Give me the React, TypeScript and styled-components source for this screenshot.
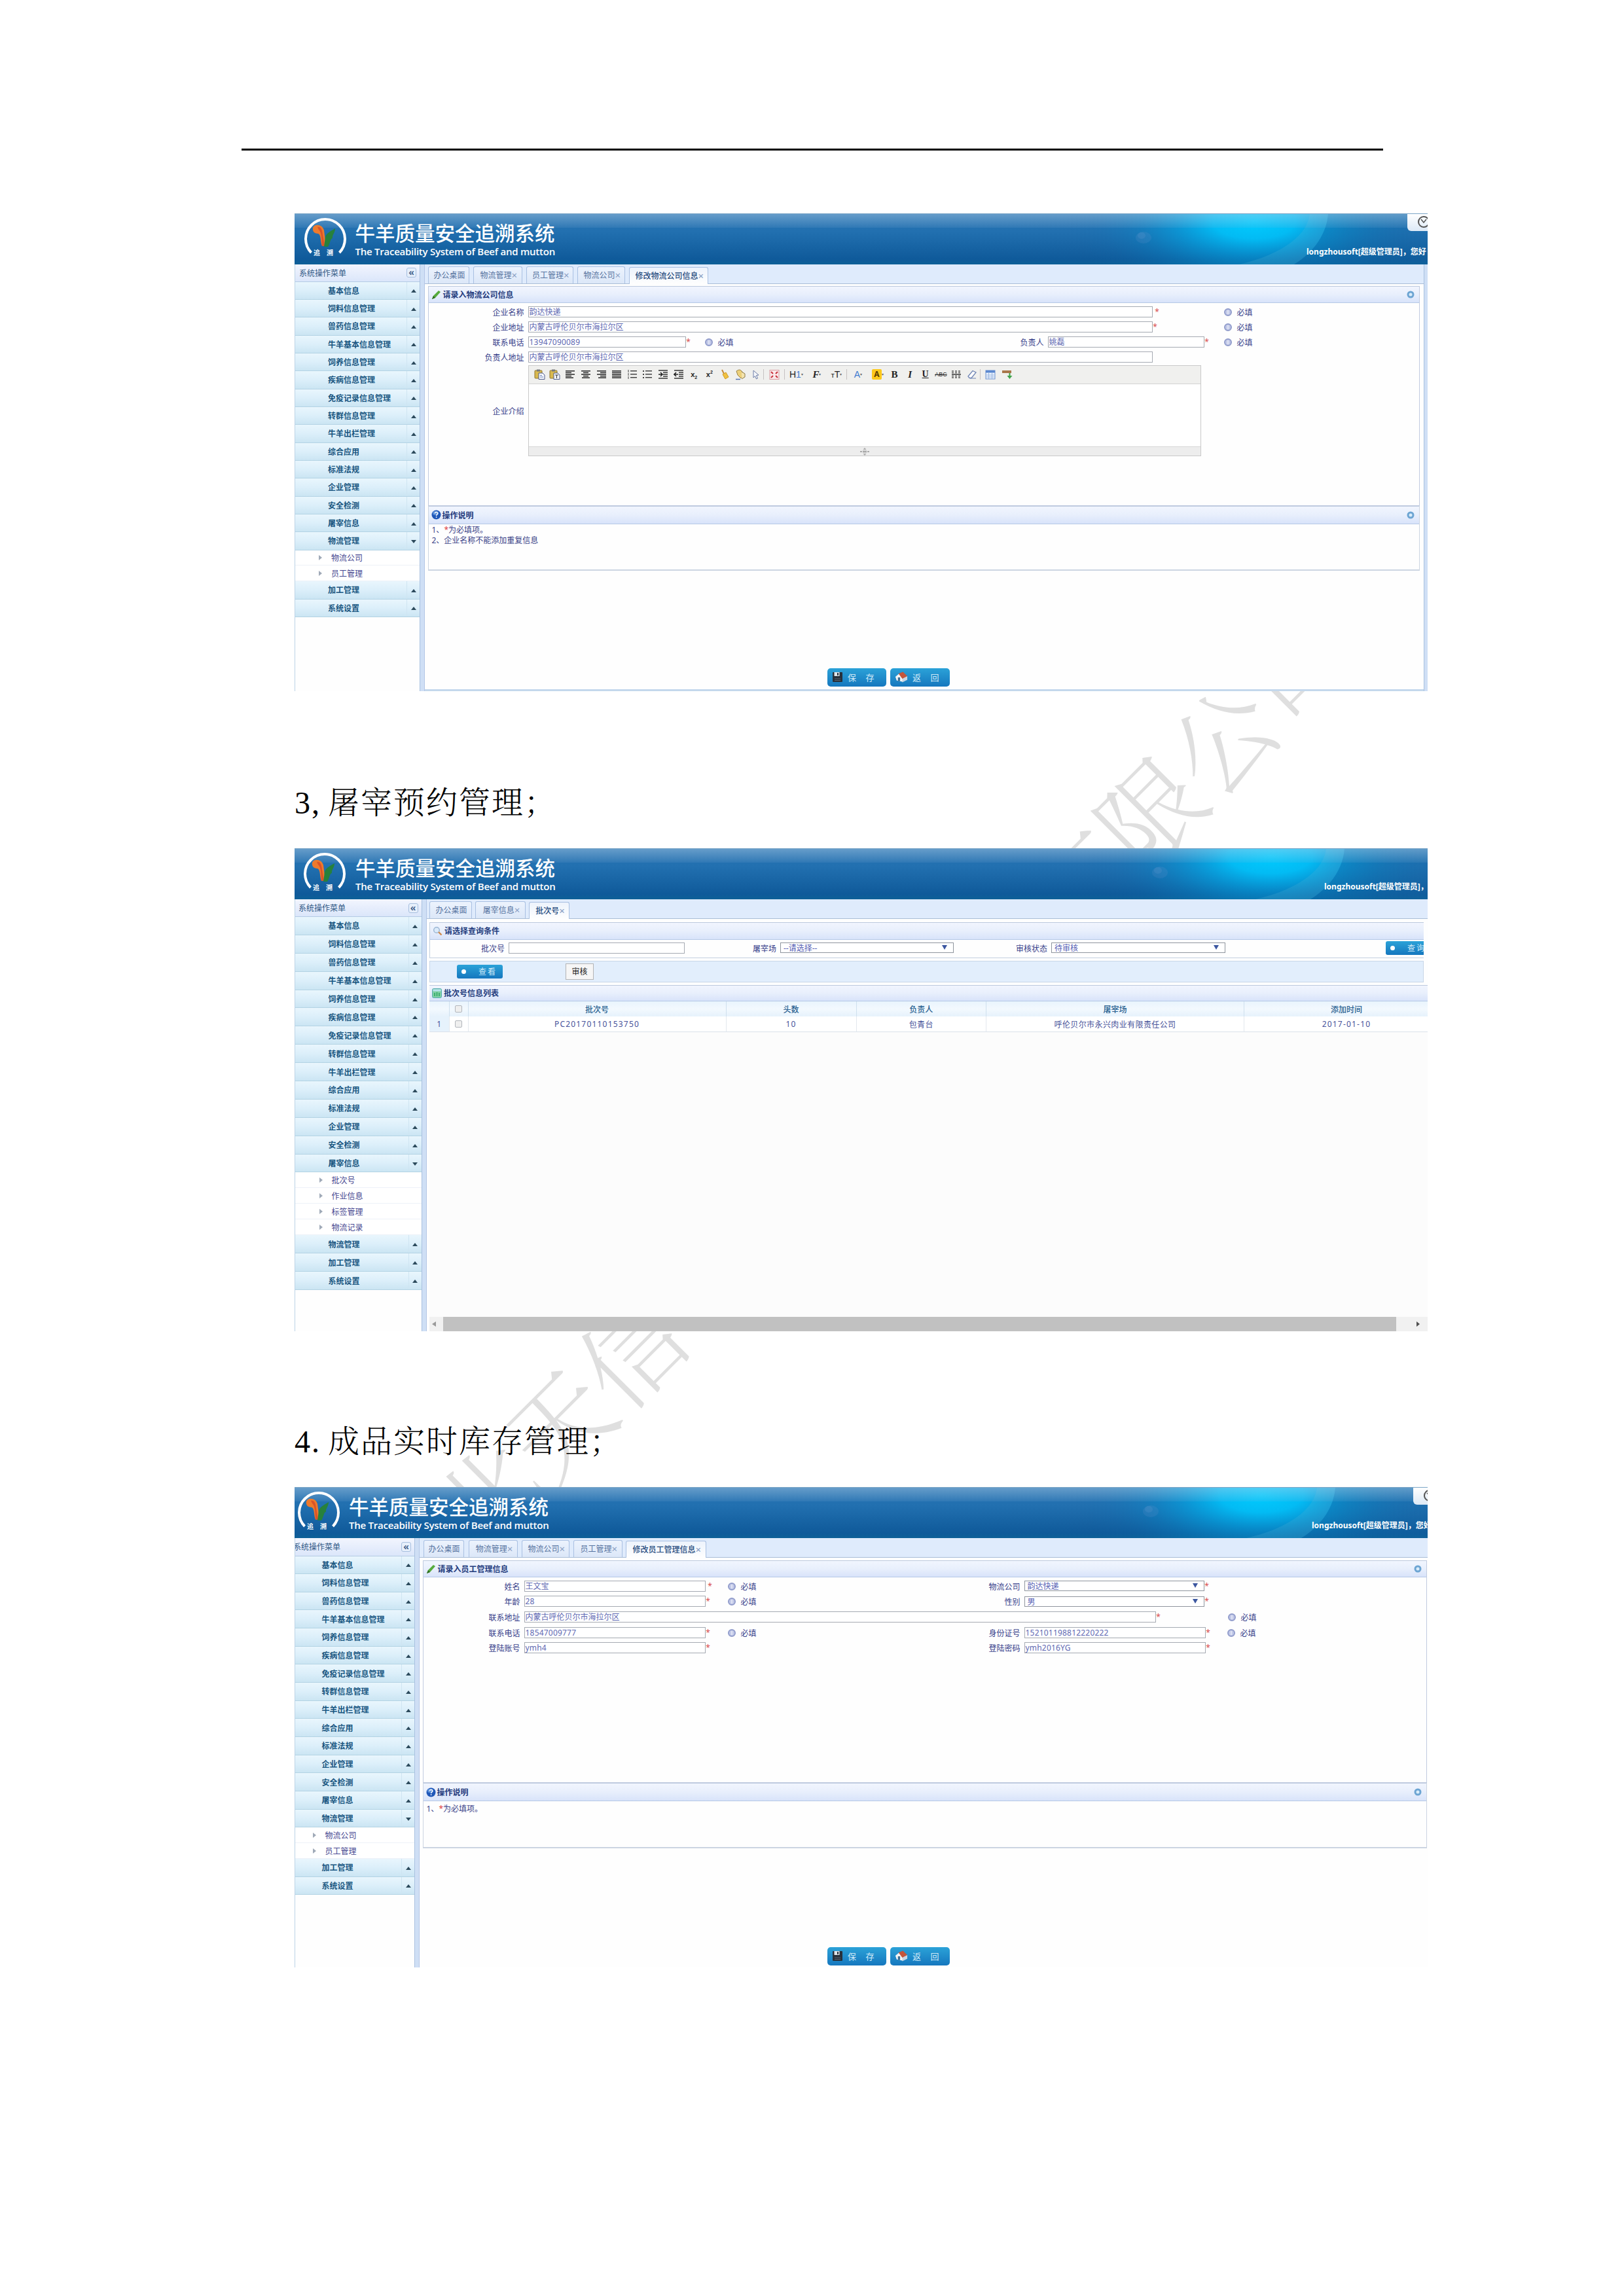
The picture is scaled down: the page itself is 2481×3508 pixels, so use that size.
import { FC, ReactNode } from "react";
import styled, { createGlobalStyle } from "styled-components";

const sans = `"Noto Sans", "Noto Sans CJK SC", sans-serif`;

const menuItems = [
  "基本信息",
  "饲料信息管理",
  "兽药信息管理",
  "牛羊基本信息管理",
  "饲养信息管理",
  "疾病信息管理",
  "免疫记录信息管理",
  "转群信息管理",
  "牛羊出栏管理",
  "综合应用",
  "标准法规",
  "企业管理",
  "安全检测",
  "屠宰信息",
  "物流管理",
  "加工管理",
  "系统设置",
];

const LogoIcon: FC = () => (
  <svg width="64" height="64" viewBox="0 0 64 64">
    <path d="M10.5 54 A30 30 0 1 1 53.5 54" fill="none" stroke="#fff" strokeWidth="4" />
    <path
      d="M13 16 C16 9 28 11 30 20 L33 43 L27 44 C24 36 26 27 21 25 C15 25 12 21 13 16Z"
      fill="#ee7a2c"
    />
    <path d="M20 15 C25 14 27 18 28 26 L31 43 L27 44 C26 34 27 24 22 19Z" fill="#d9532a" />
    <path d="M30 45 L32 30 C34 24 39 22 47 17 C47 24 42 27 43 32 C39 33 40 39 36 45Z" fill="#27813c" />
    <text x="14" y="58" fontSize="10" fontWeight="700" fill="#fff" fontFamily="Noto Sans CJK SC">
      追
    </text>
    <text x="34" y="58" fontSize="10" fontWeight="700" fill="#fff" fontFamily="Noto Sans CJK SC">
      溯
    </text>
  </svg>
);

const GlowArt: FC = () => (
  <svg width="760" height="78" viewBox="0 0 760 78">
    <defs>
      <radialGradient
        id="glow"
        gradientUnits="userSpaceOnUse"
        cx="0"
        cy="0"
        r="290"
        gradientTransform="translate(415 12) scale(1 0.42)"
      >
        <stop offset="0" stopColor="#00ccff" />
        <stop offset="0.22" stopColor="#00c2fa" stopOpacity="0.92" />
        <stop offset="0.42" stopColor="#00a8e6" stopOpacity="0.62" />
        <stop offset="0.62" stopColor="#0490d0" stopOpacity="0.34" />
        <stop offset="0.82" stopColor="#0a7abc" stopOpacity="0.12" />
        <stop offset="1" stopColor="#1068a8" stopOpacity="0" />
      </radialGradient>
      <linearGradient id="shade" x1="0" y1="0" x2="1" y2="0">
        <stop offset="0" stopColor="#0b5a98" stopOpacity="0.3" />
        <stop offset="1" stopColor="#1a6cac" stopOpacity="0.2" />
      </linearGradient>
    </defs>
    <rect width="760" height="78" fill="url(#glow)" />
    <path d="M500 0 C498 30 462 62 392 78 L476 78 C508 58 526 30 528 0Z" fill="#5fb8d8" opacity="0.2" />
    <path d="M528 0 C526 30 508 58 476 78 L760 78 L760 0Z" fill="url(#shade)" />
    <ellipse cx="246" cy="37" rx="12" ry="9" fill="#7d9fd4" opacity="0.14" />
    <ellipse cx="243" cy="34" rx="6" ry="5" fill="#8fa8dc" opacity="0.14" />
  </svg>
);

const ClockIcon: FC = () => (
  <svg width="20" height="20" viewBox="0 0 20 20" fill="none" stroke="#555" strokeWidth="2">
    <circle cx="10" cy="10" r="8" />
    <path d="M6 6 L10 11 L14 6" strokeWidth="1.5" />
  </svg>
);

const PencilIcon: FC = () => (
  <svg width="15" height="15" viewBox="0 0 15 15">
    <path d="M1 14 L3 9 L11 1 L14 3 L6 12Z" fill="#56ab3c" />
    <path d="M1 14 L3 9 L6 12Z" fill="#2e6b22" />
  </svg>
);

const SearchIcon: FC = () => (
  <svg width="15" height="15" viewBox="0 0 15 15">
    <circle cx="6" cy="6" r="4.3" fill="#dcebfa" stroke="#9db7d4" strokeWidth="1.5" />
    <path d="M9 9 L13.5 13.5" stroke="#d08a4a" strokeWidth="2.4" />
  </svg>
);

const ListIcon: FC = () => (
  <svg width="15" height="15" viewBox="0 0 15 15">
    <rect x="0.5" y="0.5" width="14" height="14" rx="2" fill="#7fd0a4" stroke="#56aab0" />
    <rect x="1.5" y="1.5" width="12" height="3" fill="#b8e2f0" />
    <path d="M4 7v5M7.5 6v6M11 7v5" stroke="#3eb070" strokeWidth="2" />
  </svg>
);

const HelpIcon: FC = () => (
  <svg width="15" height="15" viewBox="0 0 15 15">
    <circle cx="7.5" cy="7.5" r="7" fill="#1f57b8" />
    <ellipse cx="6.5" cy="5" rx="4.5" ry="3.2" fill="#7fb2ee" opacity="0.6" />
    <path d="M5.3 5.6c0-3 4.6-2.6 4.4-.2C9.6 7 7.6 7 7.6 9M7.6 10.3v1.6" stroke="#fff" strokeWidth="1.5" fill="none" />
  </svg>
);

const RingIcon: FC = () => (
  <svg width="12" height="12" viewBox="0 0 12 12">
    <circle cx="6" cy="6" r="4" fill="#d9ecfa" stroke="#6da5d3" strokeWidth="3" />
  </svg>
);

const InfoIcon: FC = () => (
  <svg width="12" height="12" viewBox="0 0 12 12">
    <circle cx="6" cy="6" r="5" fill="#c3cae8" stroke="#929dcc" strokeWidth="2" />
    <path d="M6 3v6" stroke="#e6e9f6" strokeWidth="1.6" />
  </svg>
);

const SaveIcon: FC = () => (
  <svg width="17" height="17" viewBox="0 0 17 17">
    <rect x="1" y="1" width="15" height="15" rx="1" fill="#27303a" />
    <rect x="3.5" y="1" width="8" height="6" fill="#dfe5ea" />
    <rect x="8" y="2" width="2" height="4" fill="#27303a" />
    <path d="M4 11h9M4 13.5h9" stroke="#59636e" strokeWidth="1" />
  </svg>
);

const HomeIcon: FC = () => (
  <svg width="20" height="18" viewBox="0 0 21 18">
    <path d="M1 8 L7 3 L13 9 V16 L3 14Z" fill="#f2f4f6" />
    <path d="M12 10 L20 7 V13 L12 17Z" fill="#c7d5e2" />
    <path d="M6 3 L13 0 L20 7 L12 11Z" fill="#c4553a" />
    <rect x="5" y="9" width="3.5" height="6" fill="#3a6f94" />
  </svg>
);

const GripIcon: FC = () => (
  <svg width="14" height="12" viewBox="0 0 14 12" fill="#aaa">
    <path d="M7 0 L9.5 3 H4.5Z M7 12 L4.5 9 H9.5Z M0 5h3v2H0z M11 5h3v2h-3z M4 4.500h6v3H4z" />
  </svg>
);

const lines = (rows: [number, number][]) => (
  <svg width="16" height="14" viewBox="0 0 16 14">
    {rows.map(([x, w], i) => (
      <rect key={i} x={x} y={1 + i * 2.6} width={w} height="1.6" fill="#333" />
    ))}
  </svg>
);

const PasteIcon: FC<{ mark: string }> = ({ mark }) => (
  <svg width="17" height="16" viewBox="0 0 17 16">
    <rect x="1" y="2" width="11" height="12" rx="1" fill="#d9b94e" stroke="#8c7430" />
    <rect x="4" y="0.5" width="5" height="3" fill="#77797c" />
    <path d="M7 6h6l3 3v6.5H7z" fill="#f6f8fc" stroke="#4f5d8c" />
    {mark === "T" ? (
      <path d="M9 9h5M11.5 9v5" stroke="#333" />
    ) : (
      <path d="M9 9.5h3M9 12h5" stroke="#6a80b8" />
    )}
  </svg>
);

const ListLines: FC<{ numbered?: boolean }> = ({ numbered }) => (
  <svg width="16" height="14" viewBox="0 0 16 14">
    {[1, 6, 11].map((y) => (
      <g key={y}>
        <rect x={numbered ? 1.5 : 1} y={y - (numbered ? 1 : 0)} width={numbered ? 1 : 2} height={numbered ? 4 : 2} fill="#444" />
        <rect x="5" y={y} width="10" height="1.5" fill="#444" />
      </g>
    ))}
  </svg>
);

const IndentIcon: FC<{ out?: boolean }> = ({ out }) => (
  <svg width="16" height="14" viewBox="0 0 16 14">
    <path d="M1 1h14M8 4h7M8 7h7M8 10h7M1 13h14" stroke="#333" strokeWidth="1.5" />
    <path d={out ? "M7 7H2M4 4L1 7L4 10" : "M1 7h5M4 4L7 7L4 10"} stroke="#222" strokeWidth="1.6" fill="none" />
  </svg>
);

const BroomIcon: FC = () => (
  <svg width="15" height="16" viewBox="0 0 15 16">
    <path d="M3 1 L6 7" stroke="#c48a3a" strokeWidth="2" />
    <path d="M4 8 L9 5 L13 12 L8 15Z" fill="#efc142" stroke="#d29c24" />
  </svg>
);

const PaintIcon: FC = () => (
  <svg width="17" height="17" viewBox="0 0 17 17">
    <path d="M2 3 Q7 -1 10 3 L14 8 L9 14 L4 9Z" fill="#ecd07a" stroke="#9a8246" />
    <path d="M10 4 L15 7 V12 L10 15" fill="#f4e3ac" stroke="#8b7a4a" />
    <path d="M1 15.5h7" stroke="#5775b5" strokeWidth="1.5" />
  </svg>
);

const CursorIcon: FC = () => (
  <svg width="12" height="15" viewBox="0 0 12 15">
    <path d="M2 1 L10 8 L6.5 8.5 L8.5 13 L6.5 14 L4.6 9.6 L2 12Z" fill="#f6f8fc" stroke="#6b7ba5" />
  </svg>
);

const ExpandIcon: FC = () => (
  <svg width="16" height="15" viewBox="0 0 16 15">
    <rect x="1" y="0.5" width="14" height="14" fill="#fbe9ea" stroke="#d99ea2" />
    <path d="M3 3l3 3M13 3l-3 3M3 12l3-3M13 12l-3-3" stroke="#c8333e" strokeWidth="2" />
  </svg>
);

const RuleIcon: FC = () => (
  <svg width="16" height="14" viewBox="0 0 16 14">
    <path d="M1 2h14M1 12h14M1 4.5h14M1 9.5h14" stroke="#555" strokeWidth="1.5" strokeDasharray="3 2" />
    <path d="M1 7h14" stroke="#333" strokeWidth="1.5" />
  </svg>
);

const EraserIcon: FC = () => (
  <svg width="16" height="14" viewBox="0 0 16 14">
    <path d="M2 10 L9 1.5 L14 4 L7 12.5 H4Z" fill="#fff" stroke="#6f84b4" strokeWidth="1.3" />
    <path d="M5 13h9" stroke="#6f84b4" />
  </svg>
);

const TableIcon: FC = () => (
  <svg width="16" height="15" viewBox="0 0 16 15">
    <rect x="1" y="1" width="14" height="13" fill="#eaf2fd" stroke="#6c92cf" />
    <rect x="1" y="1" width="14" height="3.5" fill="#5b88d0" />
    <path d="M1 8h14M1 11h14M5.5 4v10M10.5 4v10" stroke="#9cb7e0" />
  </svg>
);

const BreakIcon: FC = () => (
  <svg width="17" height="15" viewBox="0 0 17 15">
    <rect x="1" y="1" width="14" height="4" fill="#a9764a" />
    <path d="M11.5 5v4h-3l4 5 4-5h-3V5z" fill="#3fa34a" />
  </svg>
);

const App: FC = () => {
  return (
    <>
      <GlobalStyle />
      <Page>
        <TopRule />
        <Watermark $x={1808} $y={1180}>有限公司</Watermark>
        <Watermark $x={739} $y={2281}>由河北天信</Watermark>

        <Shot $top={96} $height={730}>
          <Banner titleLeft={92.5} logoLeft={15} userText="longzhousoft[超级管理员]，您好" userWidth={185} corner={31} glow={80} />
          <Work>
            <Sidebar width={191} pad={50} headPad={6} headH={26.5} rowH={27.35} open="物流管理" subItems={["物流公司", "员工管理"]} subH={23.8} />
            <Splitter $w={6.5} />
            <Main>
              <TabStrip $h={29.5} $pad={5.5}>
                <Tab $w={63} $gap={6}>办公桌面</Tab>
                <Tab $w={74.5} $gap={6}>物流管理<X /></Tab>
                <Tab $w={72.5} $gap={5.5}>员工管理<X /></Tab>
                <Tab $w={73.5} $gap={5.5}>物流公司<X /></Tab>
                <Tab $w={121.5} $gap={0} $active>修改物流公司信息<X /></Tab>
              </TabStrip>
              <Content $l={5} $r={6} $t={3.5}>
                <Panel $h={335.5}>
                  <PanelHead $h={26}>
                    <PencilIcon />
                    <HeadText>请录入物流公司信息</HeadText>
                    <RingIcon />
                  </PanelHead>
                  <PanelBody>
                    <Line $h={23.1}>
                      <Label $w={146}>企业名称</Label>
                      <Input $w={954}>韵达快递</Input>
                      <Mark $gap={3} />
                      <Hint gap={98} />
                    </Line>
                    <Line $h={23.1}>
                      <Label $w={146}>企业地址</Label>
                      <Input $w={954}>内蒙古呼伦贝尔市海拉尔区</Input>
                      <Mark $gap={0} />
                      <Hint gap={101} />
                    </Line>
                    <Line $h={23.1}>
                      <Label $w={146}>联系电话</Label>
                      <Input $w={241} $latin>13947090089</Input>
                      <Mark $gap={0} />
                      <Hint gap={21} />
                      <Label $w={474}>负责人</Label>
                      <Input $w={239}>姚磊</Input>
                      <Mark $gap={0} />
                      <Hint gap={22} />
                    </Line>
                    <Line $h={23.1}>
                      <Label $w={146}>负责人地址</Label>
                      <Input $w={954}>内蒙古呼伦贝尔市海拉尔区</Input>
                    </Line>
                    <Line $h={141}>
                      <Label $w={146}>企业介绍</Label>
                      <Editor />
                    </Line>
                  </PanelBody>
                </Panel>
                <Notes $h={99.5}>
                  <PanelHead $h={28}>
                    <HelpIcon />
                    <HeadText $tight>操作说明</HeadText>
                    <RingIcon />
                  </PanelHead>
                  <NoteList $top={1}>
                    <li>1、<Red>*</Red>为必填项。</li>
                    <li>2、企业名称不能添加重复信息</li>
                  </NoteList>
                </Notes>
                <Actions top={149} left={610.5} />
              </Content>
              <BottomEdge />
            </Main>
            <Splitter $w={6} />
          </Work>
        </Shot>

        <Heading $h={240} $top={139}>
          <Half>3,</Half>屠宰预约管理；
        </Heading>

        <Shot $top={0} $height={738}>
          <Banner titleLeft={93} logoLeft={14} userText="longzhousoft[超级管理员]，" userWidth={158} glow={105} />
          <Work>
            <Sidebar width={193.5} pad={50.5} headPad={5} headH={27} rowH={27.9} open="屠宰信息" subItems={["批次号", "作业信息", "标签管理", "物流记录"]} subH={24} />
            <Splitter $w={7} />
            <Main>
              <TabStrip $h={29.5} $pad={4.5}>
                <Tab $w={65} $gap={5}>办公桌面</Tab>
                <Tab $w={77} $gap={5}>屠宰信息<X /></Tab>
                <Tab $w={62} $gap={0} $active>批次号<X /></Tab>
              </TabStrip>
              <Content $l={4.5} $r={0} $t={5}>
                <QueryPanel>
                  <PanelHead $h={27}>
                    <SearchIcon />
                    <HeadText>请选择查询条件</HeadText>
                  </PanelHead>
                  <Line $h={25}>
                    <Label $w={114}>批次号</Label>
                    <Input $w={269} />
                    <Label $w={140}>屠宰场</Label>
                    <Select $w={265}>--请选择--<Caret /></Select>
                    <Label $w={143}>审核状态</Label>
                    <Select $w={266}>待审核<Caret /></Select>
                    <BlueButton $w={70} $h={21} $ml={245}>
                      <Dot />查 询
                    </BlueButton>
                  </Line>
                </QueryPanel>
                <ToolBar>
                  <BlueButton $w={70} $h={21} $ml={41}>
                    <Dot />查 看
                  </BlueButton>
                  <PlainButton>审核</PlainButton>
                </ToolBar>
                <PanelHead $h={25.5}>
                  <ListIcon />
                  <HeadText>批次号信息列表</HeadText>
                </PanelHead>
                <Grid>
                  <HeadCell />
                  <HeadCell><CheckBox /></HeadCell>
                  <HeadCell>批次号</HeadCell>
                  <HeadCell>头数</HeadCell>
                  <HeadCell>负责人</HeadCell>
                  <HeadCell>屠宰场</HeadCell>
                  <HeadCell>添加时间</HeadCell>
                  <Cell $first>1</Cell>
                  <Cell><CheckBox /></Cell>
                  <Cell $latin>PC20170110153750</Cell>
                  <Cell $latin>10</Cell>
                  <Cell>包青台</Cell>
                  <Cell>呼伦贝尔市永兴肉业有限责任公司</Cell>
                  <Cell $latin>2017-01-10</Cell>
                </Grid>
                <Blank />
                <ScrollBar>
                  <Triangle $dir="left" $c="#9a9a9a" />
                  <Thumb />
                  <Triangle $dir="right" $c="#505050" />
                </ScrollBar>
              </Content>
            </Main>
          </Work>
        </Shot>

        <Heading $h={238} $top={137}>
          <Half>4.</Half>成品实时库存管理；
        </Heading>

        <Shot $top={0} $height={734}>
          <Banner titleLeft={83} logoLeft={5} userText="longzhousoft[超级管理员]，您好" userWidth={177} corner={22} glow={91} />
          <Work>
            <Sidebar width={183} pad={40.5} headPad={-3} headH={27.5} rowH={27.67} open="物流管理" subItems={["物流公司", "员工管理"]} subH={23.8} />
            <Splitter $w={6.5} />
            <Main>
              <TabStrip $h={29.5} $pad={6}>
                <Tab $w={62} $gap={7.5}>办公桌面</Tab>
                <Tab $w={75} $gap={5.5}>物流管理<X /></Tab>
                <Tab $w={73.5} $gap={6}>物流公司<X /></Tab>
                <Tab $w={74.5} $gap={5.5}>员工管理<X /></Tab>
                <Tab $w={122.5} $gap={0} $active>修改员工管理信息<X /></Tab>
              </TabStrip>
              <Content $l={5} $r={1.5} $t={4.5}>
                <Panel $h={340}>
                  <PanelHead $h={26}>
                    <PencilIcon />
                    <HeadText>请录入员工管理信息</HeadText>
                    <RingIcon />
                  </PanelHead>
                  <PanelBody>
                    <Line $h={23.6}>
                      <Label $w={148}>姓名</Label>
                      <Input $w={277}>王文宝</Input>
                      <Mark $gap={3} />
                      <Hint gap={23} />
                      <Label $w={403}>物流公司</Label>
                      <Select $w={275}>韵达快递<Caret /></Select>
                      <Mark $gap={0} />
                    </Line>
                    <Line $h={23.6}>
                      <Label $w={148}>年龄</Label>
                      <Input $w={277} $latin>28</Input>
                      <Mark $gap={0} />
                      <Hint gap={26} />
                      <Label $w={403}>性别</Label>
                      <Select $w={275}>男<Caret /></Select>
                      <Mark $gap={0} />
                    </Line>
                    <Line $h={23.6}>
                      <Label $w={148}>联系地址</Label>
                      <Input $w={965}>内蒙古呼伦贝尔市海拉尔区</Input>
                      <Mark $gap={0} />
                      <Hint gap={102} />
                    </Line>
                    <Line $h={23.6}>
                      <Label $w={148}>联系电话</Label>
                      <Input $w={277} $latin>18547009777</Input>
                      <Mark $gap={0} />
                      <Hint gap={26} />
                      <Label $w={403}>身份证号</Label>
                      <Input $w={277} $latin>152101198812220222</Input>
                      <Mark $gap={0} />
                      <Hint gap={25} />
                    </Line>
                    <Line $h={23.6}>
                      <Label $w={148}>登陆账号</Label>
                      <Input $w={277} $latin>ymh4</Input>
                      <Mark $gap={0} />
                      <Label $w={473}>登陆密码</Label>
                      <Input $w={277} $latin>ymh2016YG</Input>
                      <Mark $gap={0} />
                    </Line>
                  </PanelBody>
                </Panel>
                <Notes $h={100}>
                  <PanelHead $h={28}>
                    <HelpIcon />
                    <HeadText $tight>操作说明</HeadText>
                    <RingIcon />
                  </PanelHead>
                  <NoteList $top={4}>
                    <li>1、<Red>*</Red>为必填项。</li>
                  </NoteList>
                </Notes>
                <Actions top={151} left={618.5} />
              </Content>
            </Main>
          </Work>
        </Shot>
      </Page>
    </>
  );
};

export default App;

interface BannerProps {
  titleLeft: number;
  logoLeft: number;
  userText: string;
  userWidth: number;
  corner?: number;
  glow: number;
}

const Banner: FC<BannerProps> = ({ titleLeft, logoLeft, userText, userWidth, corner, glow }) => (
  <BannerBox>
    <Glow $over={glow}>
      <GlowArt />
    </Glow>
    <Gloss />
    <LogoBox $left={logoLeft} $w={titleLeft - logoLeft}>
      <LogoIcon />
    </LogoBox>
    <Titles>
      <Title>牛羊质量安全追溯系统</Title>
      <SubTitle>The Traceability System of Beef and mutton</SubTitle>
    </Titles>
    <User $w={userWidth}>{userText}</User>
    {corner && (
      <Corner $w={corner}>
        <ClockIcon />
      </Corner>
    )}
  </BannerBox>
);

interface SidebarProps {
  width: number;
  pad: number;
  headPad: number;
  headH: number;
  rowH: number;
  open: string;
  subItems: string[];
  subH: number;
}

const Sidebar: FC<SidebarProps> = ({ width, pad, headPad, headH, rowH, open, subItems, subH }) => (
  <Side $w={width}>
    <SideHead $h={headH}>
      <SideTitle $ml={headPad}>系统操作菜单</SideTitle>
      <Collapse>«</Collapse>
    </SideHead>
    {menuItems.map((item) => (
      <div key={item}>
        <MenuRow $h={rowH} $pad={pad}>
          {item}
          <MenuArrow>
            <Triangle $dir={item === open ? "down" : "up"} $c="#2c4a5c" />
          </MenuArrow>
        </MenuRow>
        {item === open &&
          subItems.map((child) => (
            <SubRow key={child} $h={subH} $pad={pad - 14}>
              <Triangle $dir="right" $c="#a0aab8" />
              <span>{child}</span>
            </SubRow>
          ))}
      </div>
    ))}
  </Side>
);

const X: FC = () => <CloseMark>×</CloseMark>;

const Hint: FC<{ gap: number }> = ({ gap }) => (
  <HintBox $gap={gap}>
    <InfoIcon />
    必填
  </HintBox>
);

const Actions: FC<{ top: number; left: number }> = ({ top, left }) => (
  <ActionRow $top={top} $left={left}>
    <BlueButton $w={90} $h={27.5} $ml={0} $wide>
      <SaveIcon />
      保 存
    </BlueButton>
    <BlueButton $w={90.5} $h={27.5} $ml={6} $wide>
      <HomeIcon />
      返 回
    </BlueButton>
  </ActionRow>
);

const Editor: FC = () => {
  const icons: ReactNode[] = [
    <PasteIcon mark="" />,
    <PasteIcon mark="T" />,
    lines([[1, 14], [1, 9], [1, 14], [1, 9], [1, 12]]),
    lines([[1, 14], [4, 8], [1, 14], [4, 8], [2, 12]]),
    lines([[1, 14], [6, 9], [1, 14], [6, 9], [3, 12]]),
    lines([[1, 14], [1, 14], [1, 14], [1, 14], [1, 14]]),
    <ListLines numbered />,
    <ListLines />,
    <IndentIcon />,
    <IndentIcon out />,
    <Glyph $size={11} $bold>x<sub>2</sub></Glyph>,
    <Glyph $size={11} $bold>x<sup>2</sup></Glyph>,
    <BroomIcon />,
    <PaintIcon />,
    <CursorIcon />,
  ];

  return (
    <EditorBox>
      <EditorBar>
        {icons.map((icon, i) => (
          <Tool key={i} $w={23.6}>{icon}</Tool>
        ))}
        <Divider />
        <Tool $w={31}><ExpandIcon /></Tool>
        <Divider />
        <Tool $w={34}><Glyph $size={14}>H<Blue>1</Blue></Glyph><Tick>▾</Tick></Tool>
        <Tool $w={29}><Glyph $size={15} $serif $italic $bold>F</Glyph><Tick>▾</Tick></Tool>
        <Tool $w={31}><Glyph $size={14}><small>т</small>T</Glyph><Tick>▾</Tick></Tool>
        <Divider />
        <Tool $w={33}><Glyph $size={14}><Blue>A</Blue></Glyph><Tick>▾</Tick></Tool>
        <Tool $w={27}><Highlight>A</Highlight><Tick>▾</Tick></Tool>
        <Tool $w={24}><Glyph $size={15} $serif $bold>B</Glyph></Tool>
        <Tool $w={23.5}><Glyph $size={15} $serif $bold $italic>I</Glyph></Tool>
        <Tool $w={23.5}><Glyph $size={14} $serif $bold><u>U</u></Glyph></Tool>
        <Tool $w={24}><Glyph $size={9}><s>ABC</s></Glyph></Tool>
        <Tool $w={23.5}><RuleIcon /></Tool>
        <Tool $w={24}><EraserIcon /></Tool>
        <Divider />
        <Tool $w={31}><TableIcon /></Tool>
        <Tool $w={20}><BreakIcon /></Tool>
      </EditorBar>
      <EditorArea />
      <EditorStatus>
        <GripIcon />
      </EditorStatus>
    </EditorBox>
  );
};

const GlobalStyle = createGlobalStyle`
  * {
    box-sizing: border-box;
  }
  body {
    margin: 0;
    background: #fff;
  }
  svg {
    display: block;
    flex-shrink: 0;
  }
`;

const Page = styled.div`
  position: relative;
  width: 2481px;
  height: 3508px;
  padding: 227px 0 0 450px;
  overflow: hidden;
  display: flex;
  flex-direction: column;
  font-family: ${sans};
  font-size: 12px;
  color: #3a4288;
`;

const TopRule = styled.div`
  width: 1744px;
  height: 3px;
  margin-left: -81px;
  background: #000;
  flex-shrink: 0;
`;

const Watermark = styled.div<{ $x: number; $y: number }>`
  position: absolute;
  left: ${({ $x }) => $x}px;
  top: ${({ $y }) => $y}px;
  transform: translate(-50%, -50%) rotate(-45deg);
  font-family: "Noto Serif CJK SC", "Noto Sans CJK SC", serif;
  font-weight: 300;
  font-size: 156px;
  line-height: 1;
  white-space: nowrap;
  color: #dfdfdf;
`;

const Shot = styled.section<{ $top: number; $height: number }>`
  position: relative;
  width: 1731px;
  height: ${({ $height }) => $height}px;
  margin-top: ${({ $top }) => $top}px;
  flex-shrink: 0;
  display: flex;
  flex-direction: column;
  overflow: hidden;
  background: #fefefe;
`;

const Heading = styled.h2<{ $h: number; $top: number }>`
  position: relative;
  flex-shrink: 0;
  height: ${({ $h }) => $h}px;
  margin: 0;
  padding-top: ${({ $top }) => $top}px;
  font-family: "Noto Serif CJK SC", "Noto Sans CJK SC", serif;
  font-weight: 300;
  font-size: 48px;
  letter-spacing: 2px;
  line-height: 56px;
  color: #000;
`;

const Half = styled.span`
  display: inline-block;
  width: 51px;
  font-family: "Liberation Serif", serif;
  font-weight: 400;
  font-size: 48px;
`;

const BannerBox = styled.header`
  position: relative;
  height: 78px;
  flex-shrink: 0;
  display: flex;
  overflow: hidden;
  background: linear-gradient(#2672b2 0%, #2270b0 35%, #0f5a9a 90%, #0d6097 100%);
`;

const Glow = styled.div<{ $over: number }>`
  position: absolute;
  top: 0;
  right: ${({ $over }) => -$over}px;
`;

const Gloss = styled.div`
  position: absolute;
  inset: 0 0 auto 0;
  height: 22px;
  background: linear-gradient(rgba(190, 215, 235, 0.42), rgba(140, 180, 215, 0.12));
  border-top: 1px solid #7ba5c6;
`;

const LogoBox = styled.div<{ $left: number; $w: number }>`
  position: relative;
  width: ${({ $w }) => $w}px;
  margin-left: ${({ $left }) => $left}px;
  padding-top: 6px;
`;

const Titles = styled.div`
  position: relative;
  display: flex;
  flex-direction: column;
  padding-top: 10px;
  color: #fff;
  white-space: nowrap;
`;

const Title = styled.div`
  font-size: 30.5px;
  line-height: 38px;
  font-weight: 500;
  font-family: "Noto Sans CJK SC", sans-serif;
`;

const SubTitle = styled.div`
  font-family: "Open Sans", sans-serif;
  font-size: 15px;
  font-weight: 600;
  line-height: 21px;
  letter-spacing: -0.25px;
`;

const User = styled.div<{ $w: number }>`
  position: relative;
  width: ${({ $w }) => $w}px;
  margin-left: auto;
  padding-top: 51px;
  line-height: 16px;
  font-weight: 700;
  color: #fff;
  white-space: nowrap;
  flex-shrink: 0;
`;

const Corner = styled.div<{ $w: number }>`
  position: absolute;
  top: 1px;
  right: 0;
  width: ${({ $w }) => $w}px;
  height: 26px;
  padding: 2px 0 0 15px;
  overflow: hidden;
  border-bottom-left-radius: 6px;
  background: linear-gradient(#fff, #dce9f6);
`;

const Work = styled.div`
  flex: 1;
  min-height: 0;
  display: flex;
`;

const Side = styled.nav<{ $w: number }>`
  width: ${({ $w }) => $w}px;
  flex-shrink: 0;
  border-left: 1px solid #bcd3e6;
  overflow: hidden;
`;

const SideHead = styled.div<{ $h: number }>`
  height: ${({ $h }) => $h}px;
  display: flex;
  align-items: center;
  justify-content: space-between;
  padding-right: 5px;
  background: linear-gradient(#f2f5fe, #dbe6fa);
  border-bottom: 1px solid #b4cbe4;
`;

const SideTitle = styled.span<{ $ml: number }>`
  margin-left: ${({ $ml }) => $ml}px;
  color: #2f5784;
`;

const Collapse = styled.span`
  width: 15px;
  height: 15px;
  border: 1px solid #a7bfdf;
  border-radius: 3px;
  background: #e6effb;
  color: #3c5a86;
  font-size: 15px;
  font-weight: 600;
  line-height: 11px;
  text-align: center;
`;

const MenuRow = styled.div<{ $h: number; $pad: number }>`
  height: ${({ $h }) => $h}px;
  padding-left: ${({ $pad }) => $pad}px;
  display: flex;
  align-items: center;
  justify-content: space-between;
  background: linear-gradient(#e9f6fd, #dceffa 50%, #cbe5f3);
  border-bottom: 1px solid #b3d3e4;
  color: #185580;
  font-weight: 700;
  white-space: nowrap;
`;

const MenuArrow = styled.span`
  width: 20px;
  align-self: stretch;
  display: flex;
  align-items: center;
  justify-content: center;
  padding-top: 2px;
  border-left: 1px solid #cfe5f2;
`;

const SubRow = styled.div<{ $h: number; $pad: number }>`
  height: ${({ $h }) => $h}px;
  padding-left: ${({ $pad }) => $pad}px;
  display: flex;
  align-items: center;
  gap: 14px;
  border-bottom: 1px solid #edf1f8;
  background: #fff;
  color: #454690;
`;

const Triangle = styled.i<{ $dir: "up" | "down" | "left" | "right"; $c: string }>`
  width: 0;
  height: 0;
  flex-shrink: 0;
  border: 4px solid transparent;
  ${({ $dir, $c }) => {
    switch ($dir) {
      case "up":
        return `border-bottom: 5px solid ${$c}; border-top: 0;`;
      case "down":
        return `border-top: 5px solid ${$c}; border-bottom: 0;`;
      case "left":
        return `border-right: 6px solid ${$c}; border-left: 0;`;
      case "right":
        return `border-left: 5px solid ${$c}; border-right: 0;`;
    }
  }}
`;

const Splitter = styled.div<{ $w: number }>`
  width: ${({ $w }) => $w}px;
  flex-shrink: 0;
  background: #cfdff5;
  border-left: 1px solid #a9c1e0;
`;

const Main = styled.main`
  flex: 1;
  min-width: 0;
  display: flex;
  flex-direction: column;
  border-left: 1px solid #b4c6e6;
`;

const TabStrip = styled.div<{ $h: number; $pad: number }>`
  height: ${({ $h }) => $h}px;
  padding-left: ${({ $pad }) => $pad}px;
  flex-shrink: 0;
  display: flex;
  align-items: flex-end;
  background: #dfebfc;
  border-bottom: 1px solid #a9bdd6;
`;

const Tab = styled.div<{ $w: number; $gap: number; $active?: boolean }>`
  width: ${({ $w }) => $w}px;
  height: 26px;
  margin-right: ${({ $gap }) => $gap}px;
  margin-bottom: ${({ $active }) => ($active ? "-1px" : "0")};
  padding-left: 2px;
  display: flex;
  align-items: center;
  justify-content: center;
  border: 1px solid #a9c0e2;
  border-bottom: none;
  border-radius: 3px 3px 0 0;
  background: ${({ $active }) => ($active ? "linear-gradient(#edf3fc, #fefefe)" : "linear-gradient(#ecf3fd, #dce7f8)")};
  color: ${({ $active }) => ($active ? "#24497c" : "#5673a0")};
  font-weight: ${({ $active }) => ($active ? 500 : 400)};
  white-space: nowrap;
`;

const CloseMark = styled.span`
  color: #8aa0c4;
  font-size: 15px;
  line-height: 12px;
  margin-right: -1px;
`;

const Content = styled.div<{ $l: number; $r: number; $t: number }>`
  flex: 1;
  min-height: 0;
  display: flex;
  flex-direction: column;
  padding: ${({ $l, $r, $t }) => `${$t}px ${$r}px 0 ${$l}px`};
`;

const Panel = styled.section<{ $h: number }>`
  height: ${({ $h }) => $h}px;
  flex-shrink: 0;
  border: 1px solid #c1cbe0;
  border-top: none;
`;

const PanelHead = styled.div<{ $h: number }>`
  height: ${({ $h }) => $h}px;
  padding: 0 7px 0 4px;
  flex-shrink: 0;
  display: flex;
  align-items: center;
  gap: 2px;
  background: linear-gradient(#f1f5fe, #e8effc 50%, #d8e3fa);
  border-top: 1px solid #bcc9de;
  border-bottom: 1px solid #b6c9e6;
`;

const PanelBody = styled.div`
  padding-top: 1.5px;
`;

const HeadText = styled.span<{ $tight?: boolean }>`
  flex: 1;
  margin-left: ${({ $tight }) => ($tight ? "0" : "1px")};
  color: #223a7c;
  font-weight: 700;
`;

const Line = styled.div<{ $h: number }>`
  height: ${({ $h }) => $h}px;
  display: flex;
  align-items: center;
  white-space: nowrap;
`;

const Label = styled.label<{ $w: number }>`
  width: ${({ $w }) => $w}px;
  padding-top: 1px;
  flex-shrink: 0;
  text-align: right;
  color: #363d8a;
`;

const Input = styled.div<{ $w: number; $latin?: boolean }>`
  width: ${({ $w }) => $w}px;
  height: 17px;
  margin-left: 6px;
  padding-left: 1px;
  flex-shrink: 0;
  border: 1px solid #a5aab2;
  line-height: 15px;
  letter-spacing: ${({ $latin }) => ($latin ? "0.2px" : "0")};
  background: #fff;
  color: #5e68b2;
`;

const Select = styled.div<{ $w: number }>`
  width: ${({ $w }) => $w}px;
  height: 16px;
  margin-left: 6px;
  padding: 0 9px 0 4px;
  flex-shrink: 0;
  display: flex;
  justify-content: space-between;
  border: 1px solid #8f959e;
  line-height: 16px;
  background: #fff;
  color: #5660b4;
`;

const Caret = styled.i`
  width: 0;
  height: 0;
  margin-top: 3px;
  border: 4px solid transparent;
  border-top: 7px solid #3c57a0;
  border-bottom: 0;
`;

const Mark = styled.span<{ $gap: number }>`
  width: 8px;
  margin-left: ${({ $gap }) => $gap}px;
  flex-shrink: 0;
  text-align: center;
  color: #d84a4a;
  &::before {
    content: "*";
  }
`;

const HintBox = styled.span<{ $gap: number }>`
  width: 44px;
  margin-left: ${({ $gap }) => $gap}px;
  padding-top: 1px;
  flex-shrink: 0;
  display: flex;
  align-items: center;
  gap: 8px;
  color: #363d8a;
`;

const Notes = styled.section<{ $h: number }>`
  height: ${({ $h }) => $h}px;
  flex-shrink: 0;
  border: 1px solid #ccd5e2;
  border-top: 0;
  border-bottom-width: 2px;
`;

const NoteList = styled.ul<{ $top: number }>`
  margin: 0;
  padding: ${({ $top }) => $top}px 0 0 5px;
  list-style: none;
  line-height: 16.5px;
`;

const Red = styled.span`
  color: #e03c3c;
`;

const ActionRow = styled.div<{ $top: number; $left: number }>`
  display: flex;
  padding: ${({ $top, $left }) => `${$top}px 0 0 ${$left}px`};
`;

const BlueButton = styled.div<{ $w: number; $h: number; $ml: number; $wide?: boolean }>`
  width: ${({ $w }) => $w}px;
  height: ${({ $h }) => $h}px;
  margin-left: ${({ $ml }) => $ml}px;
  padding-left: 7px;
  flex-shrink: 0;
  display: flex;
  align-items: center;
  gap: ${({ $wide }) => ($wide ? 7 : 19)}px;
  border-radius: ${({ $wide }) => ($wide ? 5 : 3)}px;
  background: linear-gradient(#2ba2d8, #1577be);
  color: #cfeaf8;
  font-size: ${({ $wide }) => ($wide ? 13 : 12)}px;
  word-spacing: ${({ $wide }) => ($wide ? 11 : -1)}px;
  white-space: nowrap;
`;

const Dot = styled.i`
  width: 7px;
  height: 7px;
  border-radius: 50%;
  background: #fff;
`;

const PlainButton = styled.div`
  width: 43px;
  height: 25px;
  margin-left: 96px;
  border: 1px solid #b4b4b4;
  background: #f6f6f6;
  color: #222;
  line-height: 23px;
  text-align: center;
`;

const QueryPanel = styled.section`
  height: 55px;
  margin-right: 6px;
  flex-shrink: 0;
  overflow: hidden;
  border: 1px solid #c3d0e0;
  border-width: 0 0 1px 1px;
`;

const ToolBar = styled.div`
  height: 33px;
  margin: 4px 6px 4px 0;
  flex-shrink: 0;
  display: flex;
  align-items: center;
  background: #e2eefc;
  border: 1px solid #c8d6e8;
`;

const Grid = styled.div`
  display: grid;
  grid-template-columns: 31px 28.5px 394px 199px 198.5px 394px 313px;
  grid-template-rows: 23px 24px;
  flex-shrink: 0;
  overflow: hidden;
`;

const HeadCell = styled.div`
  display: flex;
  align-items: center;
  justify-content: center;
  background: linear-gradient(#e9f4fd, #f3f9fe 50%, #e6f2fc);
  border-right: 1px solid #cfe0ee;
  color: #276090;
  font-weight: 500;
`;

const Cell = styled.div<{ $first?: boolean; $latin?: boolean }>`
  display: flex;
  align-items: center;
  justify-content: center;
  background: ${({ $first }) => ($first ? "#e6f2fc" : "#fff")};
  border-right: 1px solid #e3e8ee;
  border-bottom: 1px solid #dbe2ea;
  color: #47529a;
  letter-spacing: ${({ $latin }) => ($latin ? 1.2 : 0.4)}px;
`;

const CheckBox = styled.i`
  width: 11px;
  height: 11px;
  border: 1px solid #b2b6bc;
  border-radius: 2px;
  background: #efefef;
`;

const Blank = styled.div`
  flex: 1;
  background: #fcfcfc;
`;

const ScrollBar = styled.div`
  height: 22.5px;
  padding: 0 12px 0 4px;
  flex-shrink: 0;
  display: flex;
  align-items: center;
  background: #f1f1f1;
`;

const Thumb = styled.div`
  width: 1456px;
  height: 22px;
  margin: 0 auto 0 11px;
  background: #c1c1c1;
`;

const BottomEdge = styled.div`
  height: 3px;
  flex-shrink: 0;
  background: #c4d8ec;
`;

const EditorBox = styled.div`
  width: 1028px;
  height: 139.5px;
  margin-left: 6px;
  display: flex;
  flex-direction: column;
  border: 1px solid #c9c9c9;
`;

const EditorBar = styled.div`
  height: 28px;
  padding-left: 5px;
  flex-shrink: 0;
  display: flex;
  align-items: center;
  background: #f0f0ee;
  border-bottom: 1px solid #d2d2d2;
`;

const Tool = styled.span<{ $w: number }>`
  width: ${({ $w }) => $w}px;
  flex-shrink: 0;
  display: flex;
  align-items: center;
  justify-content: center;
`;

const Glyph = styled.span<{ $size: number; $serif?: boolean; $bold?: boolean; $italic?: boolean }>`
  font-family: ${({ $serif }) => ($serif ? `"Liberation Serif", "DejaVu Serif", serif` : `"Liberation Sans", sans-serif`)};
  font-size: ${({ $size }) => $size}px;
  font-weight: ${({ $bold }) => ($bold ? 700 : 400)};
  font-style: ${({ $italic }) => ($italic ? "italic" : "normal")};
  line-height: 16px;
  color: #222;
  sub,
  sup {
    font-size: 7px;
    line-height: 0;
  }
`;

const Blue = styled.span`
  color: #3f7ad0;
`;

const Tick = styled.span`
  font-size: 6px;
  color: #666;
`;

const Highlight = styled.span`
  width: 15px;
  height: 16px;
  border-radius: 2px;
  background: #fcc91c;
  color: #5a3c00;
  font-size: 12px;
  font-weight: 700;
  line-height: 16px;
  text-align: center;
`;

const Divider = styled.i`
  width: 1px;
  height: 16px;
  flex-shrink: 0;
  background: #c6c2c2;
`;

const EditorArea = styled.div`
  flex: 1;
  background: #fff;
`;

const EditorStatus = styled.div`
  height: 14px;
  flex-shrink: 0;
  display: flex;
  align-items: center;
  justify-content: center;
  background: #ededed;
  border-top: 1px solid #d6d6d6;
`;
